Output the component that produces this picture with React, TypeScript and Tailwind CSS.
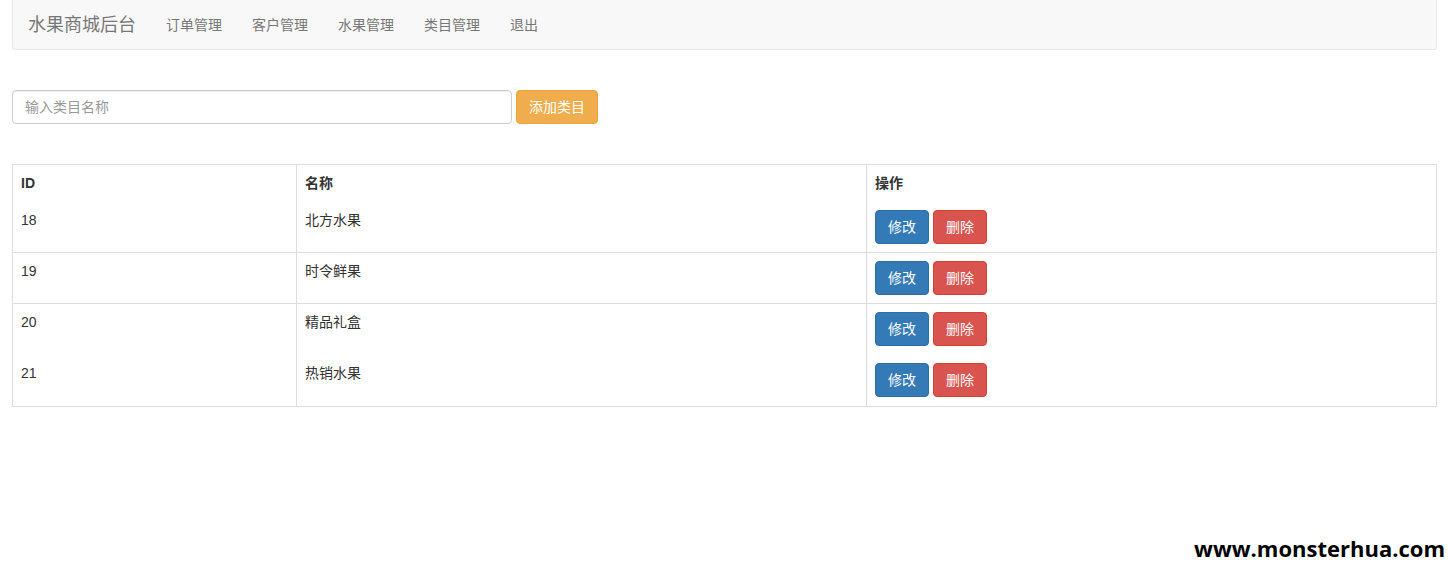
import React from 'react';

const navLinks = ['订单管理', '客户管理', '水果管理', '类目管理', '退出'];

const rows = [
  { id: 18, name: '北方水果', line: true },
  { id: 19, name: '时令鲜果', line: true },
  { id: 20, name: '精品礼盒', line: false },
  { id: 21, name: '热销水果', line: false },
];

const font = { fontFamily: '"Liberation Sans", "Noto Sans CJK SC", sans-serif' };

export default function App() {
  return (
    <div className="min-h-[579px] bg-white text-[14px] text-[#333] relative" style={font}>
      {/* Navbar */}
      <nav className="ml-3 w-[1425px] h-[50px] bg-[#f8f8f8] border border-[#e7e7e7] border-t-0 rounded-b flex items-center">
        <span className="px-[15px] text-[18px] text-[#777] leading-5">水果商城后台</span>
        {navLinks.map((l) => (
          <a key={l} className="px-[15px] text-[14px] text-[#777] leading-5">
            {l}
          </a>
        ))}
      </nav>

      {/* Add category */}
      <div className="ml-3 mt-10 flex gap-1">
        <input
          placeholder="输入类目名称"
          className="w-[500px] h-[34px] px-3 border border-[#ccc] rounded text-[14px] placeholder-[#999] shadow-[inset_0_1px_1px_rgba(0,0,0,0.075)] focus:outline-none"
        />
        <button className="w-[82px] h-[34px] bg-[#f0ad4e] border border-[#eea236] rounded text-white text-[14px]">
          添加类目
        </button>
      </div>

      {/* Table */}
      <div className="ml-3 mt-10 w-[1425px] border border-[#ddd]">
        <div className="grid grid-cols-[283px_570px_1fr] font-bold">
          <div className="px-2 pt-2 pb-[9px] leading-5">ID</div>
          <div className="px-2 pt-2 pb-[9px] leading-5 border-l border-[#ddd]">名称</div>
          <div className="px-2 pt-2 pb-[9px] leading-5 border-l border-[#ddd]">操作</div>
        </div>
        {rows.map((r, i) => {
          const line = r.line && i < rows.length - 1;
          const pad = line ? 'pt-2 pb-2' : 'pt-2 pb-[9px]';
          return (
            <div
              key={r.id}
              className={`grid grid-cols-[283px_570px_1fr] ${line ? 'border-b border-[#ddd]' : ''}`}
            >
              <div className={`px-2 ${pad} leading-5`}>{r.id}</div>
              <div className={`px-2 ${pad} leading-5 border-l border-[#ddd]`}>{r.name}</div>
              <div className={`px-2 ${pad} border-l border-[#ddd] flex gap-1`}>
                <button className="w-[54px] h-[34px] bg-[#337ab7] border border-[#2e6da4] rounded text-white text-[14px]">
                  修改
                </button>
                <button className="w-[54px] h-[34px] bg-[#d9534f] border border-[#d43f3a] rounded text-white text-[14px]">
                  删除
                </button>
              </div>
            </div>
          );
        })}
      </div>

      {/* Watermark */}
      <div
        className="absolute right-0 bottom-[17px] pl-[12px] pr-[3px] bg-white text-black font-bold text-[22px] leading-7"
        style={{ fontFamily: '"Open Sans", sans-serif' }}
      >
        www.monsterhua.com
      </div>
    </div>
  );
}
